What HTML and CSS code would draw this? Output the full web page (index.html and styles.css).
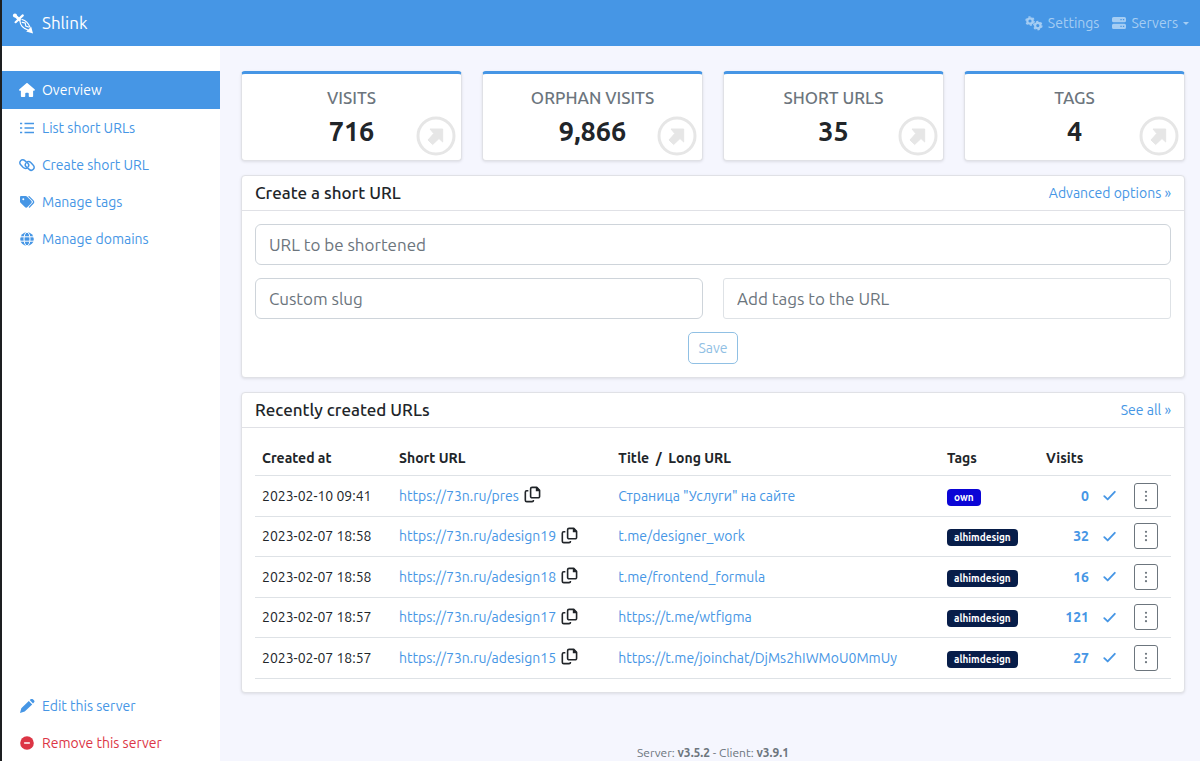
FILE: index.html
```html
<!DOCTYPE html>
<html lang="en">
<head>
<meta charset="utf-8">
<meta name="viewport" content="width=device-width, initial-scale=1">
<title>Shlink</title>
<link rel="stylesheet" href="styles.css">
</head>
<body>
<svg class="sprite" aria-hidden="true">
  <symbol id="arrow" viewBox="0 0 40 40"><circle cx="20" cy="20" r="18" fill="none" stroke="currentColor" stroke-width="3"/><path fill="currentColor" stroke="currentColor" stroke-width="1" stroke-linejoin="round" d="M14 13h12.700v13l-3.700-3.500-6.300 6-4.700-4.500 5.800-6.500z"/></symbol>
  <symbol id="copy" viewBox="0 0 18 18"><g fill="none" stroke="currentColor" stroke-width="1.700" stroke-linejoin="round"><path d="M8.500 1.500h5l3 3v6.500a1.500 1.500 0 0 1-1.500 1.500H8.500A1.500 1.500 0 0 1 7 11V3a1.500 1.500 0 0 1 1.500-1.500z"/><path d="M4.600 5H2.900A1.500 1.500 0 0 0 1.400 6.500V15a1.500 1.500 0 0 0 1.500 1.500h5.600A1.500 1.500 0 0 0 10 15v-.3"/></g><path fill="currentColor" d="M12.500 1.200h1.300l3 3.200v1.100h-4.300z"/></symbol>
  <symbol id="check" viewBox="0 0 12 12"><path fill="none" stroke="currentColor" stroke-width="1.700" stroke-linecap="round" stroke-linejoin="round" d="M1.200 6.600 4.300 9.600 10.900 2.600"/></symbol>
  <symbol id="dots" viewBox="0 0 4 12"><g fill="currentColor"><circle cx="2" cy="1.800" r="1.100"/><circle cx="2" cy="6" r="1.100"/><circle cx="2" cy="10.200" r="1.100"/></g></symbol>
</svg>

<header class="navbar">
  <a class="brand" href="#">
    <svg class="logo" viewBox="0 0 22 22" aria-hidden="true"><g fill="none" stroke="currentColor" stroke-linecap="round"><path stroke-width="4" d="M2.900 3.400h.1"/><path stroke-width="2.800" d="M3 3.600 7.500 7.800"/><path stroke-width="2.200" d="M3.600 10.200 10.800 3.400"/><path stroke-width="1.200" d="M8 9.200c.2 3.300 3 6.800 7.500 8.600M10 7.500c3.600 1 6.500 4 8 7.700M10.200 10.300l3 .7.600 3 2.700 1"/></g><path fill="currentColor" d="m19.200 14.800 1.800 6.700-6.800-2z"/></svg>
    <span>Shlink</span>
  </a>
  <nav class="nav-links">
    <a href="#"><svg class="cogs" viewBox="0 0 18 15" aria-hidden="true"><g fill="none" stroke="currentColor"><circle cx="5" cy="5" r="2.700" stroke-width="2.200"/><circle cx="5" cy="5" r="4.100" stroke-width="1.400" stroke-dasharray="2.150 2.150"/><circle cx="12.800" cy="9.600" r="2.700" stroke-width="2.200"/><circle cx="12.800" cy="9.600" r="4.100" stroke-width="1.400" stroke-dasharray="2.150 2.150"/></g></svg>Settings</a>
    <button type="button" class="nav-button"><svg class="server" viewBox="0 0 14 12" aria-hidden="true"><path fill="currentColor" fill-rule="evenodd" d="M1.600 0h10.800A1.600 1.600 0 0 1 14 1.600v2.100a1.600 1.600 0 0 1-1.600 1.600H1.600A1.600 1.600 0 0 1 0 3.700V1.600A1.600 1.600 0 0 1 1.600 0zm6.800 2v1.300h1.300V2zm2.500 0v1.300h1.300V2zM1.600 6.700h10.800A1.600 1.600 0 0 1 14 8.300v2.100a1.600 1.600 0 0 1-1.600 1.600H1.600A1.600 1.600 0 0 1 0 10.400V8.300a1.600 1.600 0 0 1 1.600-1.600zm6.800 2V10h1.300V8.700zm2.500 0V10h1.300V8.700z"/></svg>Servers<span class="caret"></span></button>
  </nav>
</header>

<div class="shell">
  <aside class="sidebar">
    <nav class="menu">
      <a class="item active" href="#"><svg viewBox="0 0 576 512" aria-hidden="true"><path fill="currentColor" d="M575.800 255.500c0 18-15 32.100-32 32.100h-32l.7 160.200V472c0 22.100-17.900 40-40 40H392c-22.100 0-40-17.900-40-40v-88c0-17.700-14.300-32-32-32h-64c-17.700 0-32 14.300-32 32v88c0 22.100-17.900 40-40 40h-80c-22.100 0-40-17.900-40-40V287.600H32c-18 0-32-14-32-32.100 0-9 3-17 10-24L266.400 8c7-7 15-8 22-8s15 2 21 7l255.400 224.500c8 7 12 15 11 24z"/></svg>Overview</a>
      <a class="item" href="#"><svg viewBox="0 0 16 14" aria-hidden="true"><path stroke="currentColor" stroke-width="1.700" fill="none" d="M5.500 2.500H15M5.500 7H15M5.500 11.500H15M1 2.500h2.200M1 7h2.200M1 11.500h2.200"/></svg>List short URLs</a>
      <a class="item" href="#"><svg viewBox="0 0 16 14" aria-hidden="true"><g fill="none" stroke="currentColor" stroke-width="1.500" stroke-linecap="round"><path d="M7.600 10.300A4 4 0 0 1 4 9.300L1.700 6.800A2.900 2.900 0 0 1 5.800 2.600L8.800 5.200a2.700 2.700 0 0 1 .3 3.700"/><path d="M8.400 3.700a4 4 0 0 1 3.600 1l2.300 2.500a2.900 2.900 0 0 1-4.100 4.200L7.200 8.800a2.700 2.700 0 0 1-.3-3.700"/></g></svg>Create short URL</a>
      <a class="item" href="#"><svg viewBox="0 0 16 14" aria-hidden="true"><path fill="currentColor" fill-rule="evenodd" d="M1 2a1 1 0 0 1 1-1h4.700c.5 0 1 .2 1.300.5l4.200 4.200c.7.700.7 1.900 0 2.600l-3.700 3.800c-.7.700-1.900.7-2.600 0L1.500 7.800A2 2 0 0 1 1 6.500zm3.300 1.200a1 1 0 1 0 0 2 1 1 0 0 0 0-2z"/><path fill="none" stroke="currentColor" stroke-width="1.300" stroke-linecap="round" d="m10 1.600 4 4a2 2 0 0 1 0 2.700l-3.600 3.800"/></svg>Manage tags</a>
      <a class="item" href="#"><svg viewBox="0 0 16 14" aria-hidden="true"><circle cx="8" cy="7" r="6.800" fill="currentColor"/><g class="globe-lines"><ellipse cx="8" cy="7" rx="3" ry="6.800"/><path d="M1 4.800h14M1 9.200h14"/></g></svg>Manage domains</a>
    </nav>
    <nav class="menu">
      <a class="item" href="#"><svg viewBox="0 0 16 14" aria-hidden="true"><path fill="currentColor" d="m10.700 1.100.9-.8a1.600 1.600 0 0 1 2.300 0l1 1a1.600 1.600 0 0 1 0 2.300l-.9.900zM9.800 2l3.400 3.400-7.500 7.200L1 14l1.300-4.700z"/></svg>Edit this server</a>
      <a class="item danger" href="#"><svg viewBox="0 0 16 14" aria-hidden="true"><circle cx="8" cy="7" r="6.800" fill="currentColor"/><path stroke="#fff" stroke-width="1.600" stroke-linecap="round" d="M5.700 7h4.600"/></svg>Remove this server</a>
    </nav>
  </aside>

  <main class="content">
    <section class="stats">
      <a class="card stat" href="#"><span class="stat-title">VISITS</span><strong class="stat-value">716</strong><svg class="stat-arrow" aria-hidden="true"><use href="#arrow"/></svg></a>
      <a class="card stat" href="#"><span class="stat-title">ORPHAN VISITS</span><strong class="stat-value">9,866</strong><svg class="stat-arrow" aria-hidden="true"><use href="#arrow"/></svg></a>
      <a class="card stat" href="#"><span class="stat-title">SHORT URLS</span><strong class="stat-value">35</strong><svg class="stat-arrow" aria-hidden="true"><use href="#arrow"/></svg></a>
      <a class="card stat" href="#"><span class="stat-title">TAGS</span><strong class="stat-value">4</strong><svg class="stat-arrow" aria-hidden="true"><use href="#arrow"/></svg></a>
    </section>

    <section class="card">
      <div class="card-header"><h2>Create a short URL</h2><a href="#">Advanced options »</a></div>
      <form class="form">
        <input class="wide" type="url" placeholder="URL to be shortened" aria-label="URL to be shortened">
        <input type="text" placeholder="Custom slug" aria-label="Custom slug">
        <input class="tags-input" type="text" placeholder="Add tags to the URL" aria-label="Add tags to the URL">
        <button class="save" type="submit" disabled>Save</button>
      </form>
    </section>

    <section class="card">
      <div class="card-header"><h2>Recently created URLs</h2><a href="#">See all »</a></div>
      <div class="table-wrap">
        <table class="urls">
          <colgroup><col class="c-date"><col class="c-short"><col class="c-long"><col class="c-tags"><col class="c-visits"><col class="c-check"><col class="c-menu"></colgroup>
          <thead><tr><th>Created at</th><th>Short URL</th><th>Title&nbsp; /&nbsp; Long URL</th><th>Tags</th><th>Visits</th><th></th><th></th></tr></thead>
          <tbody>
            <tr><td>2023-02-10 09:41</td><td><span class="short"><a href="#">https://73n.ru/pres</a><button class="copy" type="button" aria-label="Copy"><svg><use href="#copy"/></svg></button></span></td><td><a href="#">Страница "Услуги" на сайте</a></td><td><span class="tag own">own</span></td><td class="num"><a href="#">0</a></td><td><svg class="check"><use href="#check"/></svg></td><td><button class="more" type="button" aria-label="Options"><svg><use href="#dots"/></svg></button></td></tr>
            <tr><td>2023-02-07 18:58</td><td><span class="short"><a href="#">https://73n.ru/adesign19</a><button class="copy" type="button" aria-label="Copy"><svg><use href="#copy"/></svg></button></span></td><td><a href="#">t.me/designer_work</a></td><td><span class="tag">alhimdesign</span></td><td class="num"><a href="#">32</a></td><td><svg class="check"><use href="#check"/></svg></td><td><button class="more" type="button" aria-label="Options"><svg><use href="#dots"/></svg></button></td></tr>
            <tr><td>2023-02-07 18:58</td><td><span class="short"><a href="#">https://73n.ru/adesign18</a><button class="copy" type="button" aria-label="Copy"><svg><use href="#copy"/></svg></button></span></td><td><a href="#">t.me/frontend_formula</a></td><td><span class="tag">alhimdesign</span></td><td class="num"><a href="#">16</a></td><td><svg class="check"><use href="#check"/></svg></td><td><button class="more" type="button" aria-label="Options"><svg><use href="#dots"/></svg></button></td></tr>
            <tr><td>2023-02-07 18:57</td><td><span class="short"><a href="#">https://73n.ru/adesign17</a><button class="copy" type="button" aria-label="Copy"><svg><use href="#copy"/></svg></button></span></td><td><a href="#">https://t.me/wtfigma</a></td><td><span class="tag">alhimdesign</span></td><td class="num"><a href="#">121</a></td><td><svg class="check"><use href="#check"/></svg></td><td><button class="more" type="button" aria-label="Options"><svg><use href="#dots"/></svg></button></td></tr>
            <tr><td>2023-02-07 18:57</td><td><span class="short"><a href="#">https://73n.ru/adesign15</a><button class="copy" type="button" aria-label="Copy"><svg><use href="#copy"/></svg></button></span></td><td><a href="#">https://t.me/joinchat/DjMs2hIWMoU0MmUy</a></td><td><span class="tag">alhimdesign</span></td><td class="num"><a href="#">27</a></td><td><svg class="check"><use href="#check"/></svg></td><td><button class="more" type="button" aria-label="Options"><svg><use href="#dots"/></svg></button></td></tr>
          </tbody>
        </table>
      </div>
    </section>

    <footer class="footer">Server: <b>v3.5.2</b> - Client: <b>v3.9.1</b></footer>
  </main>
</div>
</body>
</html>
```
FILE: styles.css
```css
* { box-sizing: border-box; }
body {
  margin: 0;
  min-height: 100vh;
  display: flex;
  flex-direction: column;
  border-left: 2px solid #1d1f21;
  background: #f5f6fe;
  color: #212529;
  font: 14px/20px Ubuntu, "Noto Sans", sans-serif;
}
a { color: #4696e5; text-decoration: none; }
button, input { font: inherit; }
button { cursor: pointer; }
.sprite { display: none; }

.navbar {
  display: flex;
  justify-content: space-between;
  align-items: center;
  height: 46px;
  padding: 0 11px 0 10px;
  background: #4696e5;
}
.brand { display: flex; align-items: center; gap: 8px; color: #fff; font-size: 17px; }
.logo { width: 22px; height: 22px; }
.nav-links { display: flex; align-items: center; gap: 13px; }
.nav-links a, .nav-button {
  display: flex;
  align-items: center;
  gap: 5px;
  padding: 0;
  border: 0;
  background: none;
  color: #a5cdf3;
}
.cogs { width: 18px; height: 15px; }
.server { width: 14px; height: 12px; }
.caret { border: 3px solid transparent; border-top-color: currentColor; border-bottom: 0; }

.shell { flex: 1; display: flex; }
.sidebar {
  flex: none;
  width: 218px;
  display: flex;
  flex-direction: column;
  justify-content: space-between;
  padding: 25px 0 0;
  background: #fff;
}
.menu { display: flex; flex-direction: column; }
.item { display: flex; align-items: center; gap: 7px; height: 37px; padding: 0 17px; }
.item svg { width: 16px; height: 14px; }
.item.active { background: #4696e5; color: #fff; height: 38px; }
.item.danger { color: #dc3545; }
.globe-lines { fill: none; stroke: #fff; stroke-width: 1; }

.content {
  flex: 1;
  min-width: 0;
  display: flex;
  flex-direction: column;
  gap: 14px;
  padding: 25px 15px 0 21px;
}
.card {
  border: 1px solid #e0e1e6;
  border-radius: 4px;
  background: #fff;
  box-shadow: 0 1px 3px rgba(0, 0, 0, .1);
}
.stats { display: grid; grid-template-columns: repeat(4, 1fr); gap: 20px; }
.stat {
  position: relative;
  display: flex;
  flex-direction: column;
  align-items: center;
  gap: 9px;
  padding: 14px;
  height: 90px;
  border-top: 3px solid #4696e5;
}
.stat-title { color: #6c757d; font-size: 17px; font-weight: 500; }
.stat-value { color: #212529; font-size: 27px; line-height: 28px; font-weight: 700; }
.stat-arrow { position: absolute; right: 5px; bottom: 4px; width: 40px; height: 40px; color: #e6e6e6; }

.card-header {
  display: flex;
  justify-content: space-between;
  align-items: center;
  height: 35px;
  padding: 0 13px 1px;
  border-bottom: 1px solid #e0e1e6;
}
.card-header h2 { margin: 0; font-size: 17px; font-weight: 500; }
.form {
  display: grid;
  grid-template-columns: 1fr 1fr;
  gap: 13px 20px;
  padding: 13px;
}
.form input {
  width: 100%;
  height: 41px;
  padding: 0 13px 1px;
  border: 1px solid #ced4da;
  border-radius: 6px;
  background: #fff;
  color: #212529;
  font-size: 17px;
}
.form input::placeholder { color: #6c757d; opacity: 1; }
.form .tags-input { border-radius: 3px; border-color: #dee2e6; }
.form .wide { grid-column: 1 / -1; }
.save {
  grid-column: 1 / -1;
  justify-self: center;
  width: 50px;
  height: 32px;
  padding: 0;
  border: 1px solid #90c0e4;
  border-radius: 5px;
  background: #fff;
  color: #90c0e4;
}

.table-wrap { padding: 13px; }
.urls { width: 100%; table-layout: fixed; border-collapse: collapse; }
.c-date { width: 15%; }
.c-short { width: 24%; }
.c-long { width: 36%; }
.c-tags { width: 99px; }
.c-visits { width: 57px; }
.c-check { width: 31px; }
.c-menu { width: 44px; }
.urls th, .urls td { padding: 0 7px; border-bottom: 1px solid #dee2e6; text-align: left; white-space: nowrap; }
.urls th { height: 34px; font-weight: 700; }
.urls td { height: 40px; }
.urls tr:nth-child(odd) td { height: 41px; }
.urls .num { text-align: right; font-weight: 700; }
.short { display: flex; align-items: center; gap: 5px; }
.copy { display: flex; padding: 0 0 2px; border: 0; background: none; color: #212529; }
.copy svg { width: 17px; height: 17px; }
.tag {
  display: inline-block;
  padding: 0 7px;
  border-radius: 4px;
  background: #071d49;
  color: #fff;
  font-size: 10px;
  line-height: 17px;
  font-weight: 700;
}
.tag.own { background: #0b05d6; }
.check { display: block; width: 13px; height: 13px; color: #4696e5; }
.more {
  display: flex;
  align-items: center;
  justify-content: center;
  width: 24px;
  height: 26px;
  padding: 0;
  border: 1px solid #6c757d;
  border-radius: 3px;
  background: #fff;
  color: #6c757d;
}
.more svg { width: 4px; height: 12px; }
.footer { margin-top: auto; color: #6c757d; font-size: 12px; line-height: 16px; text-align: center; }
```
